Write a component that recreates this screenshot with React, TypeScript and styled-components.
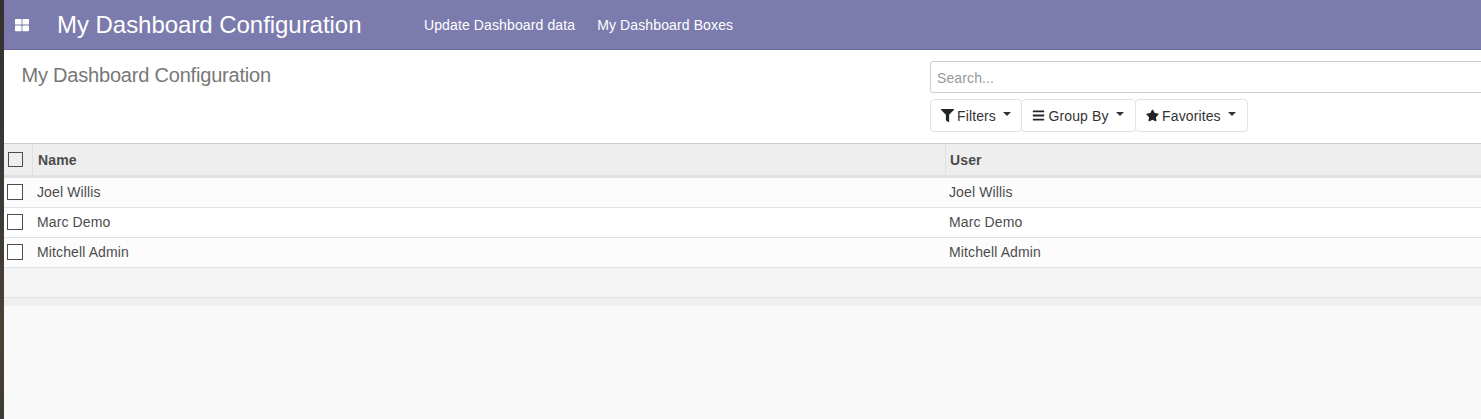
import React from 'react';
import styled, { createGlobalStyle } from 'styled-components';
import { FaFilter, FaBars, FaStar, FaThLarge } from 'react-icons/fa';

const GlobalStyle = createGlobalStyle`
  html, body {
    margin: 0;
    padding: 0;
    height: 100%;
    overflow: hidden;
    background: #f9f9f9;
    font-family: "Liberation Sans", Arial, sans-serif;
    font-size: 14px;
    letter-spacing: 0.12px;
    color: #4c4c4c;
  }
  #root {
    height: 100%;
  }
`;

const Shell = styled.div`
  display: flex;
  height: 419px;
`;

const DesktopEdge = styled.div`
  width: 4px;
  flex: none;
  background: linear-gradient(180deg, #33322f 0%, #3c3935 45%, #4b4138 80%, #3f3a35 100%);
`;

const Main = styled.div`
  flex: 1;
  min-width: 0;
  display: flex;
  flex-direction: column;
  background: #f9f9f9;
`;

const NavBar = styled.nav`
  height: 49px;
  flex: none;
  display: flex;
  align-items: center;
  background: #7c7bad;
  border-bottom: 1px solid #6a69a0;
  color: #fff;
`;

const AppsToggle = styled.span`
  width: 35px;
  display: flex;
  padding-left: 11px;
  box-sizing: border-box;
  font-size: 14px;
  margin-right: 18px;
`;

const BrandTitle = styled.span`
  font-size: 24px;
  line-height: 49px;
  letter-spacing: -0.04px;
  margin-right: 62.5px;
`;

const NavLink = styled.a`
  font-size: 14px;
  color: #fff;
  margin-right: 22px;
`;

const ControlPanel = styled.div`
  height: 94px;
  flex: none;
  box-sizing: border-box;
  display: flex;
  background: #fff;
  border-bottom: 1px solid #ccc;
`;

const Breadcrumb = styled.h2`
  width: 926px;
  flex: none;
  box-sizing: border-box;
  margin: 0;
  padding: 14px 0 0 17.5px;
  font-size: 20px;
  line-height: 23px;
  letter-spacing: -0.2px;
  font-weight: 400;
  color: #777;
`;

const SearchColumn = styled.div`
  flex: 1;
  min-width: 0;
  padding-top: 11px;
`;

const SearchBox = styled.div`
  height: 32px;
  box-sizing: border-box;
  margin-right: -10px;
  padding: 2px 0 0 6px;
  display: flex;
  align-items: center;
  border: 1px solid #ccc;
  border-radius: 3px;
  font-size: 14px;
  color: #999;
`;

const ButtonRow = styled.div`
  display: flex;
  margin-top: 6px;
`;

const FilterButton = styled.button<{ $gap: number; $endPad: number }>`
  height: 33px;
  box-sizing: border-box;
  margin: 0;
  padding: 0 ${(p) => p.$endPad}px 0 10px;
  display: flex;
  align-items: center;
  gap: ${(p) => p.$gap}px;
  background: #fff;
  border: 1px solid #e2e2e2;
  border-radius: 4px;
  font-family: inherit;
  font-size: 14px;
  letter-spacing: inherit;
  color: #333;
  & + & {
    margin-left: -1px;
  }
  svg {
    color: #212529;
    font-size: 13px;
  }
`;

const Caret = styled.span`
  width: 0;
  height: 0;
  margin-left: 4px;
  margin-bottom: 3px;
  border-top: 4px solid #333;
  border-left: 4px solid transparent;
  border-right: 4px solid transparent;
`;

const Grid = styled.div`
  display: grid;
  grid-template-columns: 29px 913px 1fr;
`;

const HeadCell = styled.div<{ $inset?: number }>`
  height: 34px;
  box-sizing: border-box;
  display: flex;
  align-items: center;
  padding: 0 0 0 ${(p) => p.$inset ?? 4}px;
  background: #eee;
  border-right: 1px solid #dee2e6;
  border-bottom: 3px solid #dee2e6;
  font-weight: 700;
  color: #4c4c4c;
  &:nth-child(3) {
    border-right: 0;
  }
`;

const Cell = styled.div<{ $odd: boolean; $inset?: number }>`
  height: 30px;
  box-sizing: border-box;
  display: flex;
  align-items: center;
  padding: 0 0 1px ${(p) => p.$inset ?? 3}px;
  background: ${(p) => (p.$odd ? '#fcfcfc' : '#fff')};
  border-bottom: 1px solid #dee2e6;
`;

const Check = styled.span<{ $head?: boolean }>`
  width: ${(p) => (p.$head ? '15px' : '16px')};
  height: ${(p) => (p.$head ? '15px' : '16px')};
  box-sizing: border-box;
  display: block;
  flex: none;
  background: ${(p) => (p.$head ? '#eee' : '#fff')};
  border: 1px solid #4c4c4c;
`;

const EmptyFoot = styled.div`
  height: 30px;
  flex: none;
  box-sizing: border-box;
  background: #f5f5f5;
  border-bottom: 1px solid #dee2e6;
`;

const TableFoot = styled.div`
  height: 8px;
  flex: none;
  background: #efefef;
`;

const users = ['Joel Willis', 'Marc Demo', 'Mitchell Admin'];

const App = () => {
  return (
    <Shell>
      <GlobalStyle />
      <DesktopEdge />
      <Main>
        <NavBar>
          <AppsToggle>
            <FaThLarge />
          </AppsToggle>
          <BrandTitle>My Dashboard Configuration</BrandTitle>
          <NavLink>Update Dashboard data</NavLink>
          <NavLink>My Dashboard Boxes</NavLink>
        </NavBar>
        <ControlPanel>
          <Breadcrumb>My Dashboard Configuration</Breadcrumb>
          <SearchColumn>
            <SearchBox>Search...</SearchBox>
            <ButtonRow>
              <FilterButton $gap={3} $endPad={10}>
                <FaFilter />
                Filters
                <Caret />
              </FilterButton>
              <FilterButton $gap={3.5} $endPad={11}>
                <FaBars />
                Group By
                <Caret />
              </FilterButton>
              <FilterButton $gap={3} $endPad={11}>
                <FaStar />
                Favorites
                <Caret />
              </FilterButton>
            </ButtonRow>
          </SearchColumn>
        </ControlPanel>
        <Grid>
          <HeadCell>
            <Check $head />
          </HeadCell>
          <HeadCell $inset={5}>Name</HeadCell>
          <HeadCell>User</HeadCell>
          {users.map((user, index) => (
            <React.Fragment key={index}>
              <Cell $odd={index % 2 === 0}>
                <Check />
              </Cell>
              <Cell $odd={index % 2 === 0} $inset={4}>
                {user}
              </Cell>
              <Cell $odd={index % 2 === 0}>{user}</Cell>
            </React.Fragment>
          ))}
        </Grid>
        <EmptyFoot />
        <TableFoot />
      </Main>
    </Shell>
  );
};

export default App;
